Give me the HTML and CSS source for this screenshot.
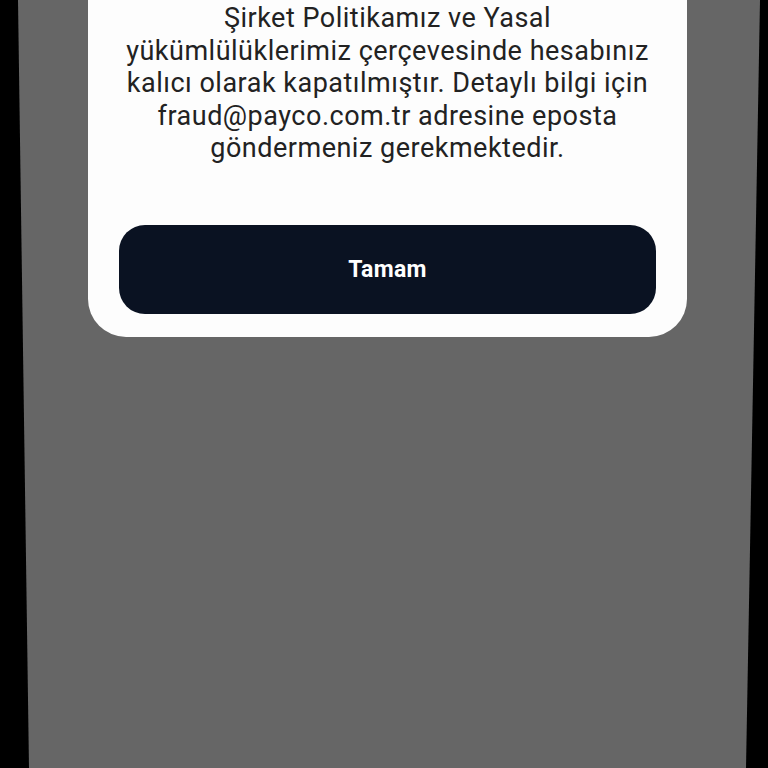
FILE: index.html
```html
<!DOCTYPE html>
<html>
<head>
<meta charset="utf-8">
<title>Hesap Kapatıldı</title>
<link rel="stylesheet" href="styles.css">
</head>
<body>
    <div class="screen">
        <div class="dialog">
            <p class="message">Şirket Politikamız ve Yasal<br>
                yükümlülüklerimiz çerçevesinde hesabınız<br>
                kalıcı olarak kapatılmıştır. Detaylı bilgi için<br>
                fraud@payco.com.tr adresine eposta<br>
                göndermeniz gerekmektedir.</p>
            <button class="button">Tamam</button>
        </div>
    </div>
</body>
</html>
```

FILE: styles.css
```css
* {
  font-family: Roboto, "Noto Sans", Arial, sans-serif;
  box-sizing: border-box;
}
html {
  height: 100%;
}
body {
  margin: 0;
  height: 100%;
  background: #000;
  overflow: hidden;
}
.screen {
  height: 768px;
  background: #666666;
  clip-path: polygon(18px 0, 760px 0, 746px 100%, 29px 100%);
  display: flex;
  flex-direction: column;
  align-items: flex-start;
}
.dialog {
  width: 599px;
  margin: -40px 0 0 88px;
  padding: 42px 31px 23px;
  background: #fdfdfd;
  border-radius: 38px;
}
.message {
  margin: 0 -20px 60px;
  font-size: 27px;
  line-height: 32.5px;
  letter-spacing: 0.5px;
  text-align: center;
  white-space: nowrap;
  color: #222;
}
.button {
  display: block;
  width: 100%;
  height: 89px;
  border: none;
  border-radius: 26px;
  background: #0a1222;
  color: #fff;
  font-size: 23px;
  font-weight: bold;
  letter-spacing: 0.3px;
}
```
